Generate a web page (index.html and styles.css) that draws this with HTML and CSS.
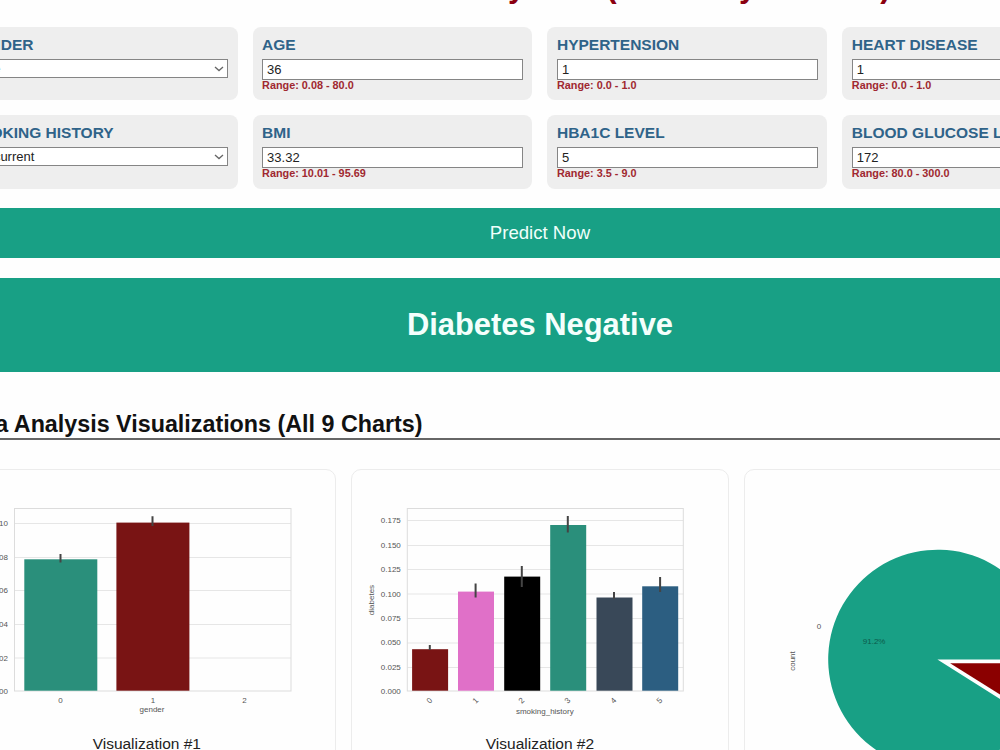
FILE: index.html
```html
<!DOCTYPE html>
<html lang="en">
<head>
    <meta charset="UTF-8">
    <meta name="viewport" content="width=device-width, initial-scale=1.0">
    <title>Diabetes Prediction System</title>
    <link rel="stylesheet" href="styles.css">
</head>
<body>
    <div class="container">
        <h1>Diabetes Prediction System (Accuracy: 97.08%)</h1>

        <form>
            <div class="form-grid">
                <div class="field">
                    <label for="gender">GENDER</label>
                    <div class="select-wrap">
                        <select id="gender"><option>Male</option><option>Female</option></select>
                        <svg class="arrow" viewBox="0 0 10 6"><path d="M1 1l4 3.6L9 1"/></svg>
                    </div>
                </div>
                <div class="field">
                    <label for="age">AGE</label>
                    <input type="text" id="age" value="36">
                    <small>Range: 0.08 - 80.0</small>
                </div>
                <div class="field">
                    <label for="hypertension">HYPERTENSION</label>
                    <input type="text" id="hypertension" value="1">
                    <small>Range: 0.0 - 1.0</small>
                </div>
                <div class="field">
                    <label for="heart">HEART DISEASE</label>
                    <input type="text" id="heart" value="1">
                    <small>Range: 0.0 - 1.0</small>
                </div>
                <div class="field">
                    <label for="smoking">SMOKING HISTORY</label>
                    <div class="select-wrap">
                        <select id="smoking"><option>not current</option><option>never</option></select>
                        <svg class="arrow" viewBox="0 0 10 6"><path d="M1 1l4 3.6L9 1"/></svg>
                    </div>
                </div>
                <div class="field">
                    <label for="bmi">BMI</label>
                    <input type="text" id="bmi" value="33.32">
                    <small>Range: 10.01 - 95.69</small>
                </div>
                <div class="field">
                    <label for="hba1c">HBA1C LEVEL</label>
                    <input type="text" id="hba1c" value="5">
                    <small>Range: 3.5 - 9.0</small>
                </div>
                <div class="field">
                    <label for="glucose">BLOOD GLUCOSE LEVEL</label>
                    <input type="text" id="glucose" value="172">
                    <small>Range: 80.0 - 300.0</small>
                </div>
            </div>
            <button type="button" class="btn-predict">Predict Now</button>
        </form>

        <div class="result">Diabetes Negative</div>

        <h2>Data Analysis Visualizations (All 9 Charts)</h2>
        <div class="charts">
            <!-- Diabetes by gender -->
            <div class="chart-card">
                <svg class="chart" viewBox="-41 470 376 264">
                    <path class="grid" d="M14.5 523.5H291M14.5 557.5H291M14.5 590.5H291M14.5 624.5H291M14.5 658H291"/>
                    <rect class="frame" x="14.5" y="508.5" width="276.5" height="182.5"/>
                    <rect class="teal" x="24.3" y="559.3" width="73" height="131.4"/>
                    <rect class="red" x="116.4" y="522.6" width="73" height="168.1"/>
                    <path class="error" d="M60.5 554V562.5M152.5 516.3V526"/>
                    <g class="tick end">
                        <text x="8" y="526">0.10</text>
                        <text x="8" y="560">0.08</text>
                        <text x="8" y="593">0.06</text>
                        <text x="8" y="627">0.04</text>
                        <text x="8" y="660.5">0.02</text>
                        <text x="8" y="693.5">0.00</text>
                    </g>
                    <g class="tick mid">
                        <text x="60.5" y="702.5">0</text>
                        <text x="153" y="702.5">1</text>
                        <text x="244.5" y="702.5">2</text>
                        <text x="152" y="712">gender</text>
                    </g>
                </svg>
                <p>Visualization #1</p>
            </div>

            <!-- Diabetes by smoking history -->
            <div class="chart-card">
                <svg class="chart" viewBox="352.2 470 376 264">
                    <path class="grid" d="M407.5 520.5H683.5M407.5 545.5H683.5M407.5 569.5H683.5M407.5 594H683.5M407.5 618.5H683.5M407.5 643H683.5M407.5 667.5H683.5"/>
                    <rect class="frame" x="407.5" y="508.5" width="276" height="182.5"/>
                    <rect class="red" x="412.3" y="649.2" width="36" height="41.5"/>
                    <rect class="pink" x="458.2" y="591.6" width="36" height="99.1"/>
                    <rect class="black" x="504.4" y="576.6" width="36" height="114.1"/>
                    <rect class="teal" x="550.4" y="525" width="36" height="165.7"/>
                    <rect class="slate" x="596.7" y="597.5" width="36" height="93.2"/>
                    <rect class="blue" x="642.4" y="586.3" width="36" height="104.4"/>
                    <path class="error" d="M430 645V650M475.8 583.5V597.5M522 566V587M568 516V532.5M614.2 592V599M660.3 577V592"/>
                    <g class="tick end">
                        <text x="401" y="523.3">0.175</text>
                        <text x="401" y="547.8">0.150</text>
                        <text x="401" y="572">0.125</text>
                        <text x="401" y="596.5">0.100</text>
                        <text x="401" y="621">0.075</text>
                        <text x="401" y="645.3">0.050</text>
                        <text x="401" y="669.8">0.025</text>
                        <text x="401" y="693.8">0.000</text>
                    </g>
                    <g class="tick mid">
                        <text transform="translate(431.5 702.5) rotate(-45)">0</text>
                        <text transform="translate(477.5 702.5) rotate(-45)">1</text>
                        <text transform="translate(523.5 702.5) rotate(-45)">2</text>
                        <text transform="translate(569.5 702.5) rotate(-45)">3</text>
                        <text transform="translate(615.5 702.5) rotate(-45)">4</text>
                        <text transform="translate(661.5 702.5) rotate(-45)">5</text>
                        <text x="545" y="714">smoking_history</text>
                        <text transform="translate(374.5 600) rotate(-90)">diabetes</text>
                    </g>
                </svg>
                <p>Visualization #2</p>
            </div>

            <!-- Share of diabetic patients -->
            <div class="chart-card">
                <svg class="chart tall" viewBox="745.4 470 376 310">
                    <path class="pie-main" d="M937.8 659.5H1047.8A109.6 109.6 0 1 0 1030.8 718Z"/>
                    <path class="pie-slice" d="M950.5 663.3H1060A109.6 109.6 0 0 1 1043.5 721.5Z"/>
                    <g class="tick mid">
                        <text x="819.5" y="628.5">0</text>
                        <text class="percent" x="874.5" y="643.5">91.2%</text>
                        <text transform="translate(795 661) rotate(-90)">count</text>
                    </g>
                </svg>
                <p>Visualization #3</p>
            </div>
        </div>
    </div>
</body>
</html>
```
FILE: styles.css
```css
* {
    box-sizing: border-box;
}
body {
    margin: 0;
    background: #fefefe;
    font-family: "Liberation Sans", Arial, sans-serif;
    overflow: hidden;
    height: 750px;
}
/* Main column, wider than the window */
.container {
    width: 1164.5px;
    margin: -31px 0 0 -42.3px;
}
h1 {
    margin: 0 0 23px;
    font-size: 31px;
    line-height: 35px;
    text-align: center;
    color: #8b0010;
}
/* Input form */
.form-grid {
    display: grid;
    grid-template-columns: repeat(4, 1fr);
    gap: 15px;
}
.field {
    height: 73.3px;
    padding: 9px 9.5px;
    background: #eeeeee;
    border-radius: 8px;
}
.field label {
    display: block;
    height: 23px;
    font-size: 15.5px;
    line-height: 18px;
    font-weight: bold;
    color: #2f6389;
}
.field input, .field select {
    display: block;
    width: 100%;
    height: 20.5px;
    padding: 0 4px;
    border: 1.5px solid #858585;
    border-radius: 0;
    background: #fff;
    color: #222;
    font-family: inherit;
    font-size: 13px;
}
.field select {
    height: 19px;
    padding: 0 4px;
    appearance: none;
}
.field small {
    display: block;
    font-size: 10.85px;
    line-height: 11px;
    font-weight: bold;
    color: #a02830;
}
.select-wrap {
    position: relative;
}
.arrow {
    position: absolute;
    right: 4px;
    top: 7px;
    width: 10px;
    height: 6px;
    fill: none;
    stroke: #666;
    stroke-width: 1.3;
}
/* Predict button and result banner */
.btn-predict {
    display: block;
    width: 100%;
    height: 50px;
    margin-top: 19.7px;
    padding: 0;
    border: none;
    background: #18a085;
    color: #f0fffb;
    font-family: inherit;
    font-size: 18.6px;
}
.result {
    height: 93.8px;
    margin-top: 20px;
    background: #18a085;
    color: #f4fffc;
    font-size: 30.9px;
    font-weight: bold;
    line-height: 94px;
    text-align: center;
}
h2 {
    margin: 38px 0 29.5px;
    height: 29.5px;
    border-bottom: 2px solid #666;
    font-size: 23.3px;
    line-height: 29px;
    color: #111;
}
/* Chart cards */
.charts {
    display: grid;
    grid-template-columns: repeat(3, 1fr);
    gap: 15px;
}
.chart-card {
    height: 340px;
    border: 1.5px solid #ececec;
    border-radius: 10px;
}
.chart-card p {
    margin: 0;
    font-size: 15.5px;
    line-height: 20px;
    text-align: center;
    color: #222;
}
.chart {
    display: block;
    width: 376px;
    height: 264px;
}
.chart.tall {
    height: 310px;
}
.grid {
    stroke: #e6e6e6;
    fill: none;
}
.frame {
    stroke: #dcdcdc;
    fill: none;
}
.error {
    stroke: #444;
    stroke-width: 2;
    fill: none;
}
.teal { fill: #2a8f7b; }
.red { fill: #791414; }
.pink { fill: #e070c8; }
.black { fill: #000; }
.slate { fill: #394858; }
.blue { fill: #2c5e81; }
.tick {
    font-size: 8px;
    fill: #555;
}
.end { text-anchor: end; }
.mid { text-anchor: middle; }
.percent { fill: #0c5a4b; }
.pie-main { fill: #18a085; }
.pie-slice { fill: #8b0000; }
```
